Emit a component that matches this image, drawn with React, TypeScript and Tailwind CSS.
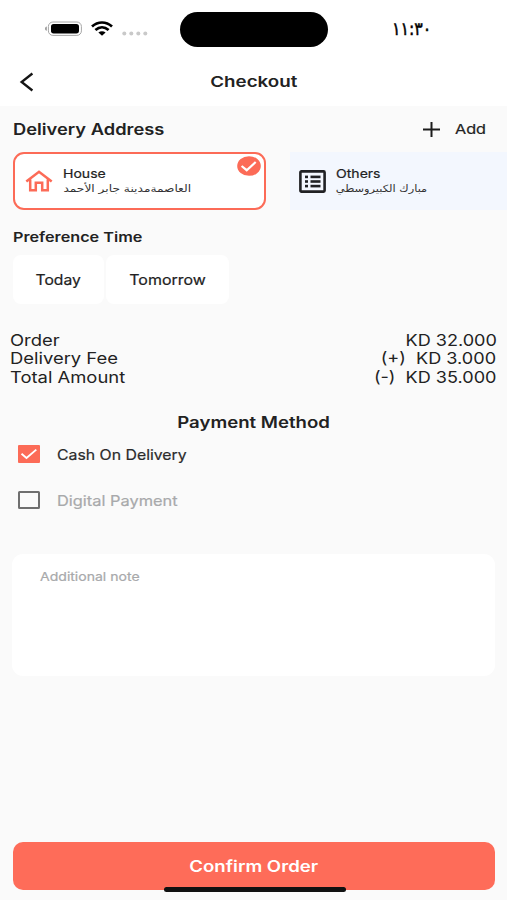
import React from "react";

const ARABIC = "font-['DejaVu_Sans',sans-serif]";

interface OptionProps {
  label: string;
  checked?: boolean;
}

function StatusBar() {
  return (
    <div className="relative h-[58px] flex items-start">
      <svg className="ml-[44px] mt-[20px]" width="106" height="18" viewBox="0 0 106 18">
        <path d="M2.8 6.6v4.2C1.6 10.4 1 9.7 1 8.7s.6-1.7 1.8-2.1z" fill="#9a9a9a" />
        <rect x="4.4" y="2" width="33" height="13.4" rx="4.5" fill="none" stroke="#a6a6a6" strokeWidth="1" />
        <rect x="7" y="4" width="28" height="9.4" rx="2.6" fill="#000" />
        <g fill="none" stroke="#000" strokeWidth="2.7">
          <path d="M48 6.600C54 1.100 62 1.100 68 6.600" />
          <path d="M51.400 10C55.500 6.400 60.500 6.400 64.600 10" />
        </g>
        <path d="M54.400 12.600c2.200-1.700 5-1.700 7.200 0L58 15.800z" fill="#000" />
        <g fill="#c9c9c9">
          <circle cx="80.300" cy="13.500" r="2" />
          <circle cx="87.300" cy="13.500" r="2" />
          <circle cx="94.300" cy="13.500" r="2" />
          <circle cx="101.300" cy="13.500" r="2" />
        </g>
      </svg>
      <div className="ml-[30px] mt-3 h-[35px] w-[148px] rounded-full bg-black" />
      <span
        className={`ml-[64px] mt-[17px] text-[18px] leading-6 text-black origin-left scale-x-[0.88] [-webkit-text-stroke:0.5px_black] ${ARABIC}`}
      >
        ١١:٣٠
      </span>
    </div>
  );
}

function Header() {
  return (
    <div className="h-[48px] flex items-center">
      <svg className="ml-[19px] shrink-0" width="16" height="20" viewBox="0 0 16 20">
        <path d="M13.400 1.500L2.600 10l10.800 8.500" fill="none" stroke="#151515" strokeWidth="2.300" />
      </svg>
      <h1 className="flex-1 pt-px pr-[35px] text-center text-[15px] font-semibold">
        <span className="inline-block scale-x-[1.25]">Checkout</span>
      </h1>
    </div>
  );
}

function HouseIcon() {
  return (
    <svg width="28" height="22" viewBox="0 0 28 22">
      <path
        d="M1.300 11.400L14 1.700l12.700 9.700M5.200 9.500v10.700h5.600v-7.400h6.400v7.400h5.600V9.500"
        fill="none"
        stroke="#fc6b57"
        strokeWidth="2.500"
      />
    </svg>
  );
}

function ListIcon() {
  return (
    <svg width="27" height="23" viewBox="0 0 27 23">
      <rect x="1.400" y="1.400" width="24.200" height="20.200" rx="1" fill="none" stroke="#202124" strokeWidth="2.600" />
      <g fill="#202124">
        <rect x="6" y="5.600" width="3" height="2.600" />
        <rect x="6" y="10.200" width="3" height="2.600" />
        <rect x="6" y="14.800" width="3" height="2.600" />
        <rect x="11.500" y="5.600" width="10" height="2.600" />
        <rect x="11.500" y="10.200" width="10" height="2.600" />
        <rect x="11.500" y="14.800" width="10" height="2.600" />
      </g>
    </svg>
  );
}

function Addresses() {
  return (
    <div className="mt-[10px] pl-[12.500px] flex gap-6 overflow-hidden">
      <div className="relative shrink-0 w-[253px] h-[58px] rounded-[11px] border-2 border-[#fc6b57] bg-white flex items-center pl-[10px]">
        <HouseIcon />
        <div className="ml-[10px]">
          <p className="text-[12px] leading-[14px] origin-left scale-x-[1.17] [-webkit-text-stroke:0.2px]">House</p>
          <p
            dir="rtl"
            className={`w-[105px] whitespace-nowrap text-[10px] leading-[15px] text-[#333] origin-left scale-x-[1.22] ${ARABIC}`}
          >
            العاصمةمدينة جابر الأحمد
          </p>
        </div>
        <svg className="absolute right-[3px] top-[2px]" width="24" height="20" viewBox="0 0 24 20">
          <ellipse cx="12" cy="10" rx="11.800" ry="9.800" fill="#fc6b57" />
          <path d="M4.600 10l5.100 4.200 9-8.200" fill="none" stroke="#fff" strokeWidth="2.200" />
        </svg>
      </div>
      <div className="shrink-0 w-[254px] h-[58px] bg-[#f3f7fe] flex items-center pl-[9px]">
        <ListIcon />
        <div className="ml-[10px]">
          <p className="text-[12px] leading-[14px] origin-left scale-x-[1.17] [-webkit-text-stroke:0.2px]">Others</p>
          <p
            dir="rtl"
            className={`w-[80px] whitespace-nowrap text-[10px] leading-[15px] text-[#333] origin-left scale-x-[1.14] ${ARABIC}`}
          >
            مبارك الكبيروسطي
          </p>
        </div>
      </div>
    </div>
  );
}

function SummaryRow({ label, value }: { label: string; value: string }) {
  return (
    <div className="flex justify-between text-[16px] leading-[18.4px] whitespace-pre">
      <span className="origin-left scale-x-[1.15]">{label}</span>
      <span className="origin-right scale-x-[1.13]">{value}</span>
    </div>
  );
}

function PaymentOption({ label, checked }: OptionProps) {
  return (
    <div className="flex items-center h-[46px] pl-[18px]">
      <svg width="22" height="18" viewBox="0 0 22 18">
        {checked ? (
          <>
            <rect width="22" height="18" rx="1" fill="#fc6b57" />
            <path d="M3.500 8.800l5 4.200 9.800-8.400" fill="none" stroke="#fff" strokeWidth="1.900" />
          </>
        ) : (
          <rect x="1" y="1" width="20" height="16" rx="0.500" fill="none" stroke="#6f6f6f" strokeWidth="2" />
        )}
      </svg>
      <span
        className={`ml-[17px] text-[14px] origin-left [-webkit-text-stroke:0.2px] ${
          checked ? "text-[#2b2b2b] scale-x-[1.13]" : "text-[#a8a9ab] scale-x-[1.17]"
        }`}
      >
        {label}
      </span>
    </div>
  );
}

export default function App() {
  return (
    <div className="w-[507px] h-[900px] overflow-hidden flex flex-col bg-[#fafafa] text-[#222] font-['Inter',sans-serif]">
      <div className="bg-white shrink-0">
        <StatusBar />
        <Header />
      </div>

      <div className="mt-3 h-6 px-[13px] flex items-center justify-between">
        <h2 className="text-[15.5px] font-semibold origin-left scale-x-[1.18]">Delivery Address</h2>
        <div className="-mt-[2px] flex items-center mr-[9px]">
          <svg width="17" height="15" viewBox="0 0 17 15">
            <path d="M8.500 0v15M0 7.500h17" stroke="#1c1c1c" strokeWidth="2" />
          </svg>
          <span className="ml-[15px] w-[30px] text-[13.500px] origin-left scale-x-[1.2] [-webkit-text-stroke:0.2px]">
            Add
          </span>
        </div>
      </div>
      <Addresses />

      <h3 className="mt-[17px] ml-[13px] self-start text-[13.500px] leading-5 font-semibold origin-left scale-x-[1.2]">
        Preference Time
      </h3>
      <div className="mt-[8px] ml-[13px] flex gap-[2px] text-[14px]">
        <button className="w-[91px] h-[49px] rounded-lg bg-white">
          <span className="inline-block scale-x-[1.12] [-webkit-text-stroke:0.2px]">Today</span>
        </button>
        <button className="w-[123px] h-[49px] rounded-lg bg-white">
          <span className="inline-block scale-x-[1.14] [-webkit-text-stroke:0.2px]">Tomorrow</span>
        </button>
      </div>

      <div className="mt-[27px] pl-[10px] pr-[10.500px]">
        <SummaryRow label="Order" value="KD 32.000" />
        <SummaryRow label="Delivery Fee" value="(+)  KD 3.000" />
        <SummaryRow label="Total Amount" value="(-)  KD 35.000" />
      </div>

      <h2 className="mt-[25px] text-center text-[15.500px] leading-6 font-semibold">
        <span className="inline-block scale-x-[1.2]">Payment Method</span>
      </h2>
      <div className="-mt-[4px]">
        <PaymentOption label="Cash On Delivery" checked />
        <PaymentOption label="Digital Payment" />
      </div>

      <div className="mt-[31px] mx-3 h-[122px] shrink-0 rounded-[11px] bg-white pl-7 pt-[14px] flex items-start">
        <span className="text-[12px] leading-[18px] text-[#a8a9ab] origin-left scale-x-[1.17] [-webkit-text-stroke:0.2px]">
          Additional note
        </span>
      </div>

      <div className="relative mt-auto mb-[10px] mx-[12.500px] h-12 shrink-0">
        <button className="w-full h-full pt-[2px] rounded-[10px] bg-[#fe6c59] text-white text-[15.500px] font-semibold">
          <span className="inline-block scale-x-[1.2]">Confirm Order</span>
        </button>
        <div className="absolute left-[151px] -bottom-[2px] w-[182px] h-[5px] rounded-full bg-[#111]" />
      </div>
    </div>
  );
}
